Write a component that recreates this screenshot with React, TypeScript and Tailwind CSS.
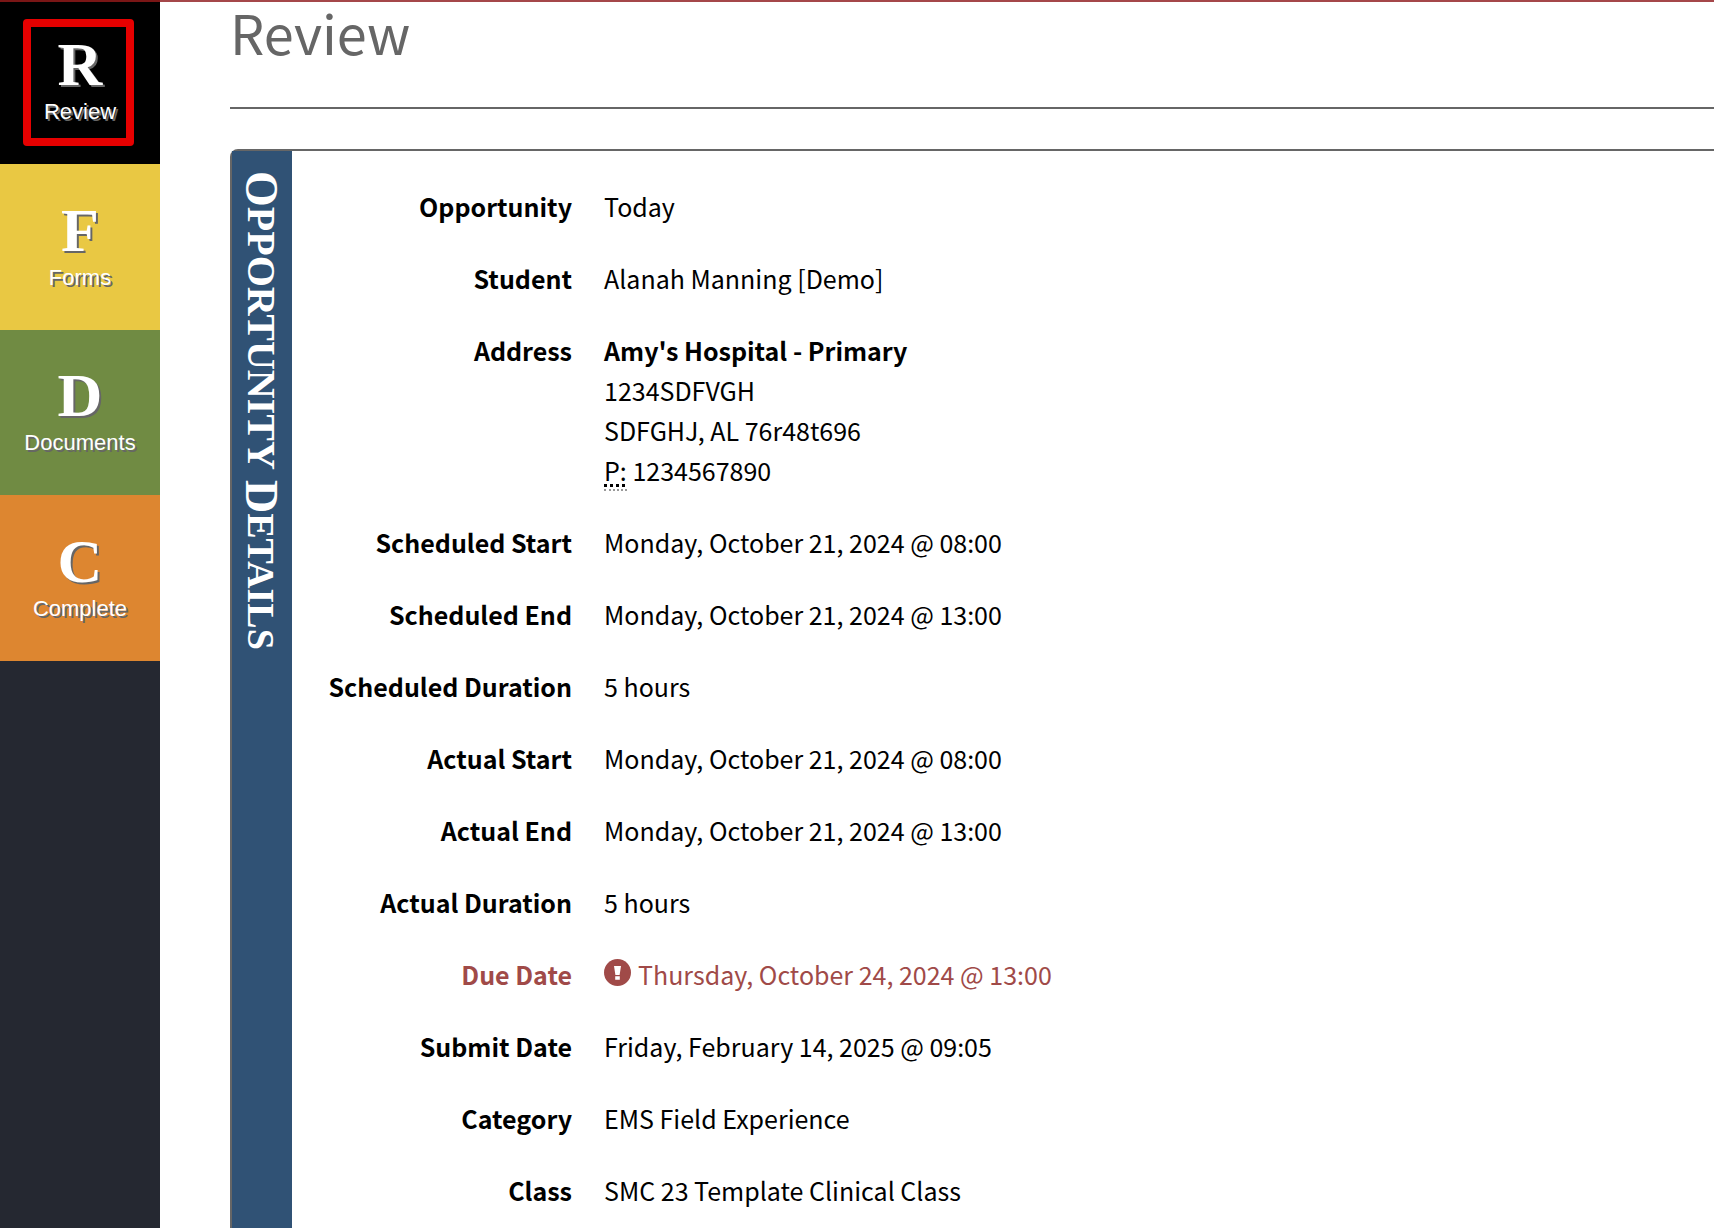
import React from "react";

type NavItem = { letter: string; label: string; tile: string; current?: boolean };

const navItems: NavItem[] = [
  { letter: "R", label: "Review", tile: "h-[164px] bg-black", current: true },
  { letter: "F", label: "Forms", tile: "h-[166px] bg-[#e9c843]" },
  { letter: "D", label: "Documents", tile: "h-[165px] bg-[#708b43]" },
  { letter: "C", label: "Complete", tile: "h-[166px] bg-[#dd8630]" },
];

function AlertIcon() {
  return (
    <svg viewBox="0 0 27 27" className="mt-[5px] h-[27px] w-[27px] shrink-0" aria-hidden="true">
      <circle cx="13.5" cy="13.5" r="13.5" fill="#a04a48" />
      <path d="M10 7h7l-1.4 9h-4.2z M11.2 17.2h4.6v3.6h-4.6z" fill="#fff" />
    </svg>
  );
}

const details: { label: string; value: React.ReactNode; overdue?: boolean }[] = [
  { label: "Opportunity", value: "Today" },
  { label: "Student", value: "Alanah Manning [Demo]" },
  {
    label: "Address",
    value: (
      <address className="not-italic">
        <strong className="font-bold">Amy's Hospital - Primary</strong>
        <br />
        1234SDFVGH
        <br />
        SDFGHJ, AL 76r48t696
        <br />
        <abbr
          title="Phone"
          className="border-b-2 border-dotted border-[#999] pb-px underline decoration-dotted decoration-[3px] underline-offset-[3px]"
        >
          P:
        </abbr>{" "}
        1234567890
      </address>
    ),
  },
  { label: "Scheduled Start", value: "Monday, October 21, 2024 @ 08:00" },
  { label: "Scheduled End", value: "Monday, October 21, 2024 @ 13:00" },
  { label: "Scheduled Duration", value: "5 hours" },
  { label: "Actual Start", value: "Monday, October 21, 2024 @ 08:00" },
  { label: "Actual End", value: "Monday, October 21, 2024 @ 13:00" },
  { label: "Actual Duration", value: "5 hours" },
  {
    label: "Due Date",
    overdue: true,
    value: (
      <span className="flex gap-[7px]">
        <AlertIcon />
        Thursday, October 24, 2024 @ 13:00
      </span>
    ),
  },
  { label: "Submit Date", value: "Friday, February 14, 2025 @ 09:05" },
  { label: "Category", value: "EMS Field Experience" },
  { label: "Class", value: "SMC 23 Template Clinical Class" },
];

function Sidebar() {
  return (
    <nav className="w-40 shrink-0 bg-[#252831]">
      {navItems.map((item) => (
        <a
          key={item.label}
          href={"#" + item.label.toLowerCase()}
          aria-current={item.current ? "page" : undefined}
          className={
            "relative flex flex-col items-center justify-end pb-9 text-white [text-shadow:2px_2px_0_#666] " + item.tile
          }
        >
          <span className="font-['Liberation_Serif','Times_New_Roman',serif] text-[62px] leading-16 font-bold">
            {item.letter}
          </span>
          <span className="font-['Liberation_Sans',Arial,sans-serif] text-[22px] leading-8">{item.label}</span>
          {item.current && (
            <span className="absolute top-[19px] left-[23px] h-[127px] w-[111px] rounded-sm border-8 border-[#e60000]" />
          )}
        </a>
      ))}
    </nav>
  );
}

export default function App() {
  return (
    <div className="relative flex min-h-screen bg-white font-['Noto_Sans_CJK_SC',sans-serif] text-black">
      <div className="absolute inset-x-0 top-0 z-10 h-0.5 bg-[#a5474a]">
        <div className="h-full w-40 bg-[#7a1616]" />
      </div>
      <Sidebar />
      <main className="flex min-w-0 flex-1 flex-col pl-[70px]">
        <h1 className="mb-10 border-b-2 border-[#666] pb-[43px] text-[54px] leading-16 text-[#666]">Review</h1>
        <section className="flex flex-1 rounded-tl-lg border-t-2 border-l-2 border-[#666]">
          <h2 className="w-[60px] shrink-0 bg-[#305275] pt-5 pr-[3px] font-['Liberation_Serif','Times_New_Roman',serif] text-[40px] leading-14 font-bold text-white [writing-mode:vertical-rl]">
            <span className="text-[46px]">O</span>PPORTUNITY{" "}
            <span className="text-[38px]">
              <span className="text-[46px]">D</span>ETAILS
            </span>
          </h2>
          <dl className="flex min-w-0 flex-1 flex-col gap-8 pt-[35px] text-[25px] leading-10">
            {details.map((row) => (
              <div key={row.label} className={row.overdue ? "flex gap-8 text-[#a04a48]" : "flex gap-8"}>
                <dt className="w-[280px] shrink-0 text-right font-bold">{row.label}</dt>
                <dd>{row.value}</dd>
              </div>
            ))}
          </dl>
        </section>
      </main>
    </div>
  );
}
